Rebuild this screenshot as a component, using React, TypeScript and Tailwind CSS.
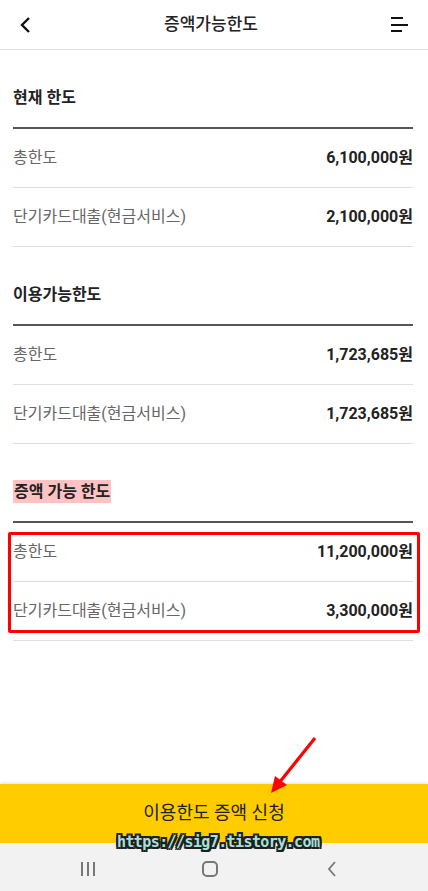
const rows1 = [
  { label: "총한도", value: "6,100,000" },
  { label: "단기카드대출(현금서비스)", value: "2,100,000" },
];
const rows2 = [
  { label: "총한도", value: "1,723,685" },
  { label: "단기카드대출(현금서비스)", value: "1,723,685" },
];
const rows3 = [
  { label: "총한도", value: "11,200,000" },
  { label: "단기카드대출(현금서비스)", value: "3,300,000" },
];

type Row = { label: string; value: string };

function Rows({ rows }: { rows: Row[] }) {
  return (
    <>
      {rows.map((r) => (
        <div
          key={r.label}
          className="h-[59px] flex items-center justify-between border-b border-[#dedede]"
        >
          <span className="text-[16px] text-[#666]">{r.label}</span>
          <span className="text-[16px] font-bold text-[#222]">{r.value}원</span>
        </div>
      ))}
    </>
  );
}

function Heading({ children, mark }: { children: string; mark?: boolean }) {
  return (
    <>
      <div className="pt-[36px] pb-[18px] h-[77px]">
        <span
          className={
            mark
              ? "inline-block bg-[#ffc2c2] px-[1px] h-[23px] leading-[23px] text-[16px] font-bold text-[#222]"
              : "inline-block h-[23px] leading-[23px] text-[16px] font-bold text-[#222]"
          }
        >
          {children}
        </span>
      </div>
      <div className="h-[2px] bg-[#555]" />
    </>
  );
}

export default function App() {
  return (
    <div
      className="relative flex flex-col w-[428px] min-h-[891px] bg-white"
      style={{ fontFamily: "Roboto, 'Noto Sans CJK KR', sans-serif" }}
    >
      {/* header */}
      <div className="h-[50px] flex items-center justify-between pl-[18px] pr-[20px] border-b border-[#e0e0e0]">
        <svg width="16" height="18" viewBox="0 0 16 18">
          <polyline points="11,2 4,9 11,16" fill="none" stroke="#111" strokeWidth="2.4" />
        </svg>
        <p className="text-[17px] font-medium text-[#222] pr-[3px]">증액가능한도</p>
        <div className="flex flex-col gap-[4.5px] w-[17px]">
          <div className="h-[2px] w-[12px] bg-[#111]" />
          <div className="h-[2px] w-[17px] bg-[#111]" />
          <div className="h-[2px] w-[11px] bg-[#111]" />
        </div>
      </div>

      <div className="px-[13px] pr-[15px]">
        <Heading>현재 한도</Heading>
        <Rows rows={rows1} />
        <Heading>이용가능한도</Heading>
        <Rows rows={rows2} />
        <Heading mark>증액 가능 한도</Heading>
        <div className="relative">
          <Rows rows={rows3} />
          <div className="absolute top-[9px] bottom-[8px] left-[-5px] right-[-7px] border-[3px] border-[#ff0000] rounded-[2px]" />
        </div>
      </div>

      <div className="flex-1" />

      {/* bottom button */}
      <div className="h-[59px] bg-[#ffcc00] flex items-center justify-center shadow-[0_-1px_3px_rgba(0,0,0,0.12)]">
        <p className="text-[18px] text-[#222] pb-[2px]">이용한도 증액 신청</p>
      </div>

      {/* system nav */}
      <div className="h-[48px] bg-[#f2f2f2] flex items-center pl-[27px]">
        <div className="w-[122px] flex justify-center">
          <div className="flex gap-[4px] pt-[4px]">
            <div className="w-[2px] h-[14px] bg-[#777]" />
            <div className="w-[2px] h-[14px] bg-[#777]" />
            <div className="w-[2px] h-[14px] bg-[#777]" />
          </div>
        </div>
        <div className="w-[122px] flex justify-center">
          <div className="w-[16px] h-[16px] border-2 border-[#777] rounded-[5px] mt-[4px]" />
        </div>
        <div className="w-[122px] flex justify-center">
          <svg width="12" height="18" viewBox="0 0 12 18" className="mt-[4px]">
            <polyline points="9,2 3,9 9,16" fill="none" stroke="#777" strokeWidth="1.8" />
          </svg>
        </div>
      </div>

      {/* annotation arrow */}
      <svg className="absolute left-[260px] top-[730px]" width="64" height="70" viewBox="0 0 64 70">
        <line x1="55" y1="8" x2="19" y2="53" stroke="#ff0000" strokeWidth="3.2" />
        <polygon points="11,63 15,46 27,55" fill="#ff0000" />
      </svg>

      {/* watermark */}
      <div
        className="absolute left-[117px] top-[831px] text-[15px] font-bold text-[#a8e0dc] tracking-[-0.6px]"
        style={{
          fontFamily: "'DejaVu Sans Mono', monospace",
          textShadow:
            "2px 0 0 #1e1e1e, -2px 0 0 #1e1e1e, 0 2px 0 #1e1e1e, 0 -2px 0 #1e1e1e, 2px 2px 0 #1e1e1e, -2px -2px 0 #1e1e1e, 2px -2px 0 #1e1e1e, -2px 2px 0 #1e1e1e",
        }}
      >
        https://sig7.tistory.com
      </div>
    </div>
  );
}
